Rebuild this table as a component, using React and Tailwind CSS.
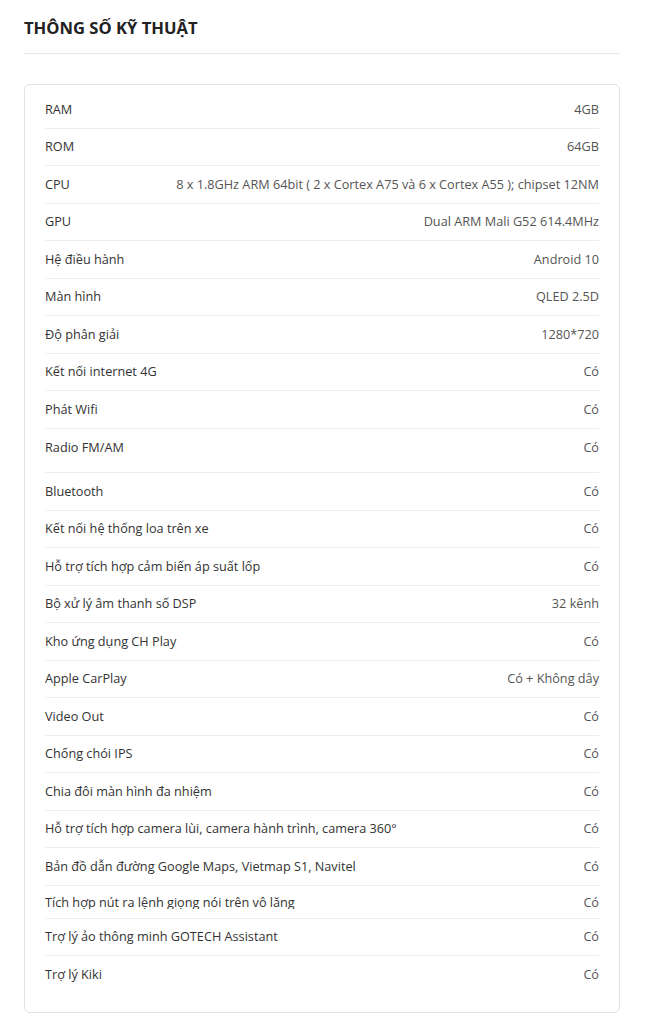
import React from 'react';

const specs = [
  ['RAM', '4GB'],
  ['ROM', '64GB'],
  ['CPU', '8 x 1.8GHz ARM 64bit ( 2 x Cortex A75 và 6 x Cortex A55 ); chipset 12NM'],
  ['GPU', 'Dual ARM Mali G52 614.4MHz'],
  ['Hệ điều hành', 'Android 10'],
  ['Màn hình', 'QLED 2.5D'],
  ['Độ phân giải', '1280*720'],
  ['Kết nối internet 4G', 'Có'],
  ['Phát Wifi', 'Có'],
  ['Radio FM/AM', 'Có', 'tall'],
  ['Bluetooth', 'Có'],
  ['Kết nối hệ thống loa trên xe', 'Có'],
  ['Hỗ trợ tích hợp cảm biến áp suất lốp', 'Có'],
  ['Bộ xử lý âm thanh số DSP', '32 kênh'],
  ['Kho ứng dụng CH Play', 'Có'],
  ['Apple CarPlay', 'Có + Không dây'],
  ['Video Out', 'Có'],
  ['Chống chói IPS', 'Có'],
  ['Chia đôi màn hình đa nhiệm', 'Có'],
  ['Hỗ trợ tích hợp camera lùi, camera hành trình, camera 360°', 'Có'],
  ['Bản đồ dẫn đường Google Maps, Vietmap S1, Navitel', 'Có'],
  ['Tích hợp nút ra lệnh giọng nói trên vô lăng', 'Có', 'cut'],
  ['Trợ lý ảo thông minh GOTECH Assistant', 'Có'],
  ['Trợ lý Kiki', 'Có', 'last'],
];

const Line = ({ label, value }) => (
  <div className="flex h-[37.5px] items-center justify-between">
    <span className="text-[#333]">{label}</span>
    <span className="text-[#555]">{value}</span>
  </div>
);

const Row = ({ label, value, kind }) => {
  if (kind === 'tall') {
    return (
      <div className="h-[44.5px] border-b border-[#ececec]">
        <Line label={label} value={value} />
      </div>
    );
  }
  if (kind === 'cut') {
    // row got sliced in the original capture, descenders are cut off
    return (
      <div className="h-[33px] border-b border-[#ececec]">
        <div className="h-[23px] overflow-hidden">
          <div className="-mt-[1.5px]">
            <Line label={label} value={value} />
          </div>
        </div>
      </div>
    );
  }
  if (kind === 'last') {
    return <Line label={label} value={value} />;
  }
  return (
    <div className="h-[37.5px] border-b border-[#ececec] [&>div]:h-[36.5px]">
      <Line label={label} value={value} />
    </div>
  );
};

const App = () => {
  return (
    <div className="min-h-screen w-[647px] bg-white px-6 pt-4 font-['Open_Sans',sans-serif]">
      <h2 className="h-6 text-[16.6px] font-bold leading-6 text-[#222]">THÔNG SỐ KỸ THUẬT</h2>
      <div className="mt-[13px] h-px w-[596px] bg-[#e8e8e8]" />
      <div className="mt-[30px] w-[596px] rounded-md border border-[#e2e2e2] px-5 pt-[6px] pb-[18px] text-[12.7px]">
        {specs.map(([label, value, kind]) => (
          <Row key={label} label={label} value={value} kind={kind} />
        ))}
      </div>
    </div>
  );
};

export default App;
